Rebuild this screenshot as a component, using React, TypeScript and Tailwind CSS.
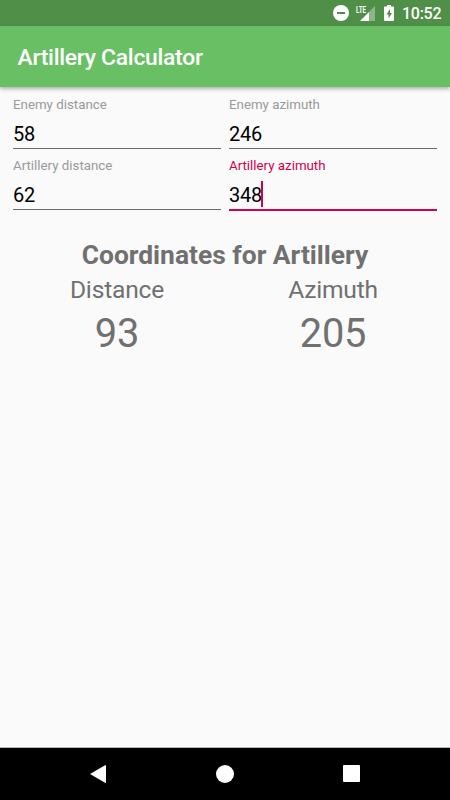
import React from "react";

function Field({ label, value, active = false }: { label: string; value: string; active?: boolean }) {
  return (
    <div className={`flex h-[61px] flex-1 flex-col ${active ? "text-[#d50047]" : "text-[#999999]"}`}>
      <div className="h-[23px] text-[13.3px] leading-[16px]">{label}</div>
      <div className="flex h-[26px] items-center text-[20px] leading-[26px] tracking-[-0.2px] text-black">
        <span className="pt-[2px]">{value}</span>
        {active && <span className="-ml-px h-[26px] w-[2px] bg-[#d50047]" />}
      </div>
      <div className={active ? "mt-[2px] h-[2px] bg-[#d50047]" : "mt-[2px] h-px bg-[#6b6b6b]"} />
    </div>
  );
}

function Result({ label, value }: { label: string; value: string }) {
  return (
    <div className="flex flex-1 flex-col items-center">
      <div className="h-[35px] text-[24.6px] leading-[35px] tracking-[-0.2px]">{label}</div>
      <div className="h-[52px] text-[39.8px] leading-[53px] tracking-[-0.2px]">{value}</div>
    </div>
  );
}

export default function App() {
  return (
    <div className="flex h-[800px] w-[450px] flex-col overflow-hidden bg-[#fafafa] font-[Roboto,sans-serif]">
      <div className="flex h-[26px] items-center justify-end bg-[#4f8f48] text-white">
        <svg width="120" height="26" viewBox="330 0 120 26">
          <circle cx="341" cy="13" r="8" fill="white" />
          <path d="M337 12h8v2h-8z" fill="#4f8f48" />
          <path d="M375 6v15h-6v-9z" fill="white" fillOpacity=".35" />
          <path d="M369 12v9h-9z" fill="white" />
          <text x="356" y="12.5" fontSize="9.5" fontWeight="700" textLength="10" lengthAdjust="spacingAndGlyphs" fill="white">LTE</text>
          <path d="M387 5h4v1.500h2q1 0 1 1v12.500q0 1-1 1h-8q-1 0-1-1v-12.500q0-1 1-1h2z" fill="white" />
          <path d="M390 9l-3.500 5.500h2v4l3.500-5.500h-2z" fill="#4f8f48" />
          <text x="402" y="19" fontSize="16" fontWeight="500" textLength="39.5" fill="white">10:52</text>
        </svg>
      </div>
      <header className="relative z-10 flex h-[61px] items-center bg-[#69bf64] pl-[17.5px] pt-[3px] text-[22.9px] font-medium tracking-[-0.28px] text-white shadow-[0_2px_4px_rgba(0,0,0,0.3)]">
        Artillery Calculator
      </header>
      <main className="flex-1 border-b border-[#b5b5b5] px-[13px] pt-[10px]">
        <div className="flex gap-[8px]">
          <Field label="Enemy distance" value="58" />
          <Field label="Enemy azimuth" value="246" />
        </div>
        <div className="flex gap-[8px]">
          <Field label="Artillery distance" value="62" />
          <Field label="Artillery azimuth" value="348" active />
        </div>
        <section className="pt-[20px] text-[#707070]">
          <h1 className="h-[33px] text-center text-[26.4px] font-bold leading-[33px]">Coordinates for Artillery</h1>
          <div className="flex gap-[8px]">
            <Result label="Distance" value="93" />
            <Result label="Azimuth" value="205" />
          </div>
        </section>
      </main>
      <nav className="h-[52px] bg-black">
        <svg width="450" height="52" viewBox="0 748 450 52" fill="white">
          <path d="M90 774l15.500-9q.5 0 .5.500v17q0 .5-.5.500z" />
          <circle cx="225" cy="774" r="9" />
          <rect x="343" y="765" width="17" height="17" rx="1" />
        </svg>
      </nav>
    </div>
  );
}
